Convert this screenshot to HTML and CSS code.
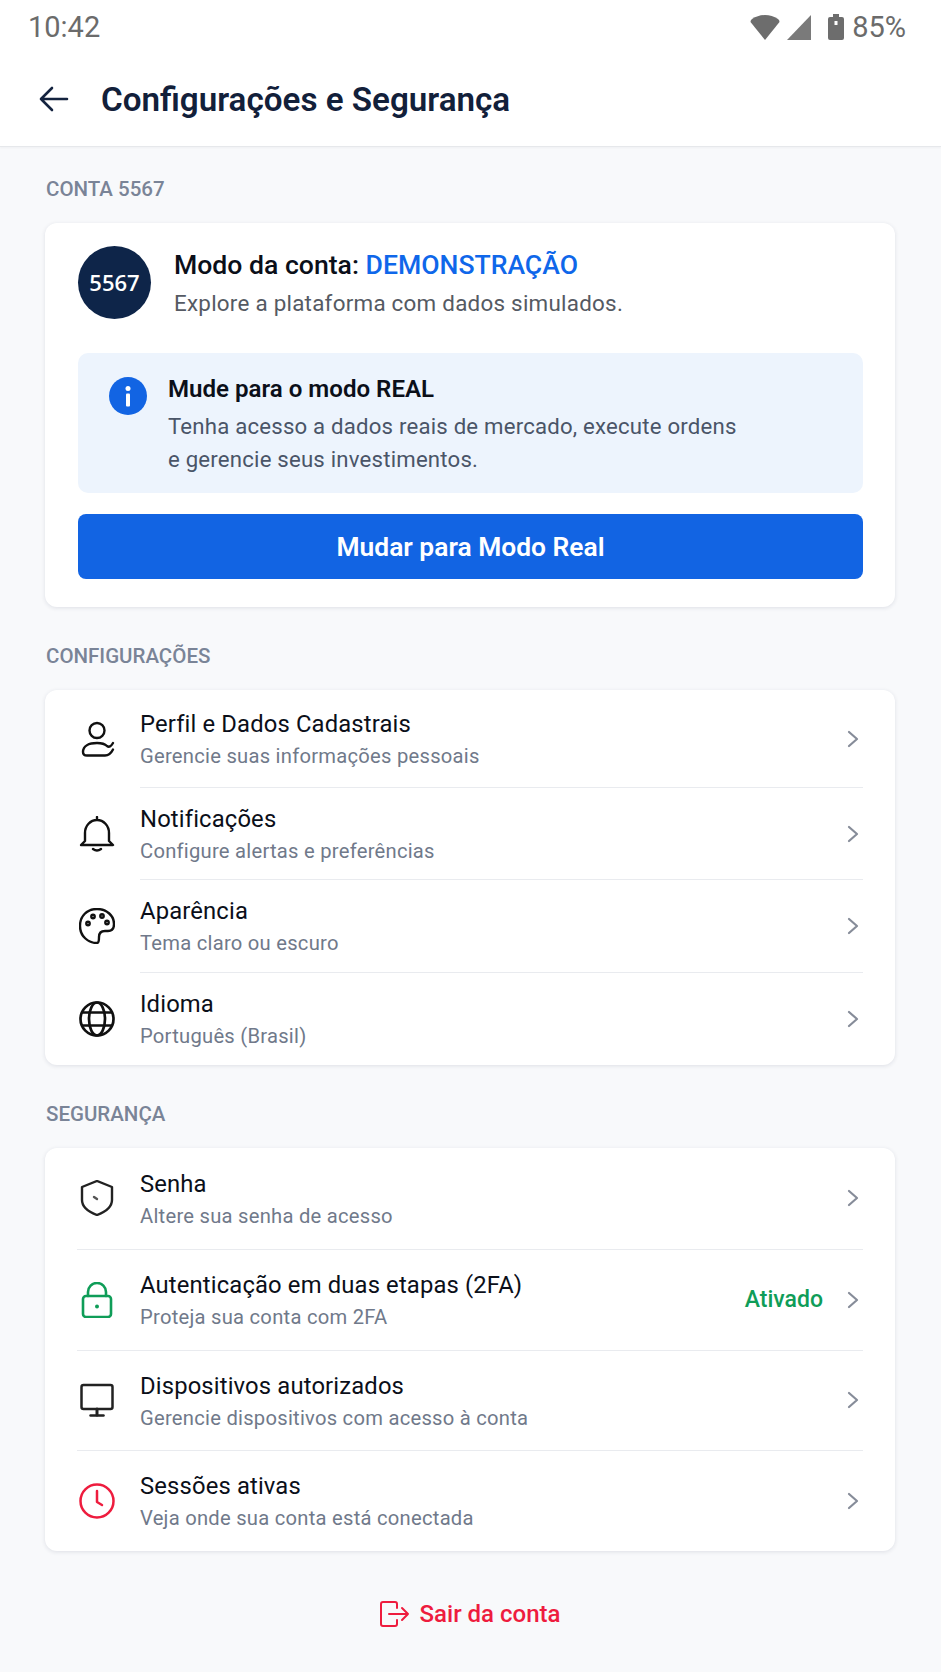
FILE: index.html
```html
<!DOCTYPE html>
<html lang="pt-BR">
<head>
<meta charset="utf-8">
<title>Configurações e Segurança</title>
<link rel="stylesheet" href="styles.css">
</head>
<body>
<div class="top">
  <div class="status">
    <span class="time">10:42</span>
    <div class="status-right">
      <svg class="st-wifi" viewBox="0 0 30 25"><path d="M15 25 .5 7Q.5 5 2 4 8 0 15 0t13 4q1.500 1 1.500 3Z" fill="#6d6d6d"/></svg>
      <svg class="st-signal" viewBox="0 0 24 25"><path d="M24 0v25H0Z" fill="#7a7a7a"/></svg>
      <svg class="st-batt" viewBox="0 0 16 26"><path d="M5 0h6v3h3q2 0 2 2v19q0 2-2 2H2q-2 0-2-2V5q0-2 2-2h3Z" fill="#6d6d6d"/><rect x="6.500" y="7" width="3" height="4" fill="#fff"/></svg>
      <span class="batt-text">85%</span>
    </div>
  </div>
  <header class="appbar">
    <svg class="back" viewBox="0 0 30 26" fill="none" stroke="#14233f" stroke-width="2.600" stroke-linecap="round" stroke-linejoin="round"><path d="M2 13h26M13 2 2 13l11 11"/></svg>
    <h1>Configurações e Segurança</h1>
  </header>
</div>

<main class="content">
  <h2 class="label label-first">CONTA 5567</h2>
  <section class="card account">
    <div class="acc-head">
      <div class="avatar">5567</div>
      <div class="acc-text">
        <p class="acc-title">Modo da conta: <span class="demo">DEMONSTRAÇÃO</span></p>
        <p class="acc-sub">Explore a plataforma com dados simulados.</p>
      </div>
    </div>
    <div class="notice">
      <svg class="info" viewBox="0 0 38 38"><circle cx="19" cy="19" r="19" fill="#1264e3"/><circle cx="19" cy="11.500" r="2.500" fill="#fff"/><rect x="17" y="16.500" width="4" height="13" rx="1" fill="#fff"/></svg>
      <div>
        <p class="notice-title">Mude para o modo REAL</p>
        <p class="notice-text">Tenha acesso a dados reais de mercado, execute ordens<br>e gerencie seus investimentos.</p>
      </div>
    </div>
    <button class="cta">Mudar para Modo Real</button>
  </section>

  <h2 class="label">CONFIGURAÇÕES</h2>
  <section class="card list list-settings">
    <div class="row">
      <svg class="ico" viewBox="0 0 36 36" fill="none" stroke="#111" stroke-width="2.400" stroke-linecap="round" stroke-linejoin="round"><circle cx="18" cy="9.500" r="7.500"/><path d="M4 31c0-6 6-9 14-9 5 0 8 1 10 3 2 1.500 4 .5 6-3M4 31c0 2 1.500 3.500 4 3.500h18c4 0 6-2 8-6"/></svg>
      <div class="row-main">
        <div class="rt"><div class="t">Perfil e Dados Cadastrais</div><div class="s">Gerencie suas informações pessoais</div></div>
        <svg class="chev" viewBox="0 0 12 18" fill="none" stroke="#868c99" stroke-width="2.200" stroke-linecap="round" stroke-linejoin="round"><path d="m2 2 8 7-8 7"/></svg>
      </div>
    </div>
    <div class="row">
      <svg class="ico" viewBox="0 0 36 36" fill="none" stroke="#111" stroke-width="2.400" stroke-linecap="round" stroke-linejoin="round"><path d="M18 1v3M6 17a12 13 0 0 1 24 0v8l4 4H2l4-4ZM14 33q4 3 8 0"/></svg>
      <div class="row-main">
        <div class="rt"><div class="t">Notificações</div><div class="s">Configure alertas e preferências</div></div>
        <svg class="chev" viewBox="0 0 12 18" fill="none" stroke="#868c99" stroke-width="2.200" stroke-linecap="round" stroke-linejoin="round"><path d="m2 2 8 7-8 7"/></svg>
      </div>
    </div>
    <div class="row">
      <svg class="ico" viewBox="0 0 36 36" fill="none" stroke="#111" stroke-width="2.400" stroke-linecap="round" stroke-linejoin="round"><path d="M18 1C8 1 1 8 1 18c0 10 8 17 17 17 2 0 2-3 2-6 0-4 2-6 6-6h3c4 0 6-3 6-7C35 8 28 1 18 1Z"/><circle cx="9" cy="15.500" r="1.700"/><circle cx="14" cy="8.500" r="1.700"/><circle cx="23" cy="8" r="1.700"/><circle cx="28" cy="14.500" r="1.700"/></svg>
      <div class="row-main">
        <div class="rt"><div class="t">Aparência</div><div class="s">Tema claro ou escuro</div></div>
        <svg class="chev" viewBox="0 0 12 18" fill="none" stroke="#868c99" stroke-width="2.200" stroke-linecap="round" stroke-linejoin="round"><path d="m2 2 8 7-8 7"/></svg>
      </div>
    </div>
    <div class="row">
      <svg class="ico" viewBox="0 0 36 36" fill="none" stroke="#111" stroke-width="2.700"><circle cx="18" cy="18" r="16.500"/><ellipse cx="18" cy="18" rx="8" ry="16.500"/><path d="M3 11.500h30M3 24.500h30"/></svg>
      <div class="row-main">
        <div class="rt"><div class="t">Idioma</div><div class="s">Português (Brasil)</div></div>
        <svg class="chev" viewBox="0 0 12 18" fill="none" stroke="#868c99" stroke-width="2.200" stroke-linecap="round" stroke-linejoin="round"><path d="m2 2 8 7-8 7"/></svg>
      </div>
    </div>
  </section>

  <h2 class="label">SEGURANÇA</h2>
  <section class="card list list-security">
    <div class="row">
      <svg class="ico" viewBox="0 0 36 36" fill="none" stroke="#222" stroke-width="2.400" stroke-linecap="round" stroke-linejoin="round"><path d="M18 1 33 7v13c0 8-7 12-15 15C10 32 3 28 3 20V7Z"/><path d="m15 17 3 2" stroke="#555"/></svg>
      <div class="row-main">
        <div class="rt"><div class="t">Senha</div><div class="s">Altere sua senha de acesso</div></div>
        <svg class="chev" viewBox="0 0 12 18" fill="none" stroke="#868c99" stroke-width="2.200" stroke-linecap="round" stroke-linejoin="round"><path d="m2 2 8 7-8 7"/></svg>
      </div>
    </div>
    <div class="row">
      <svg class="ico" viewBox="0 0 36 36" fill="none" stroke="#0f9d58" stroke-width="2.600" stroke-linecap="round" stroke-linejoin="round"><rect x="4" y="14" width="28" height="21" rx="3"/><path d="M9 14V10a9 9 0 0 1 18 0v4"/><circle cx="18" cy="24.500" r="2" fill="#0f9d58" stroke="none"/></svg>
      <div class="row-main">
        <div class="rt"><div class="t">Autenticação em duas etapas (2FA)</div><div class="s">Proteja sua conta com 2FA</div></div>
        <span class="on">Ativado</span>
        <svg class="chev" viewBox="0 0 12 18" fill="none" stroke="#868c99" stroke-width="2.200" stroke-linecap="round" stroke-linejoin="round"><path d="m2 2 8 7-8 7"/></svg>
      </div>
    </div>
    <div class="row">
      <svg class="ico" viewBox="0 0 36 36" fill="none" stroke="#222" stroke-width="2.500" stroke-linecap="round" stroke-linejoin="round"><rect x="2.500" y="3" width="31" height="24" rx="2"/><path d="M18 27v6" stroke-width="3"/><path d="M11.500 33.500h13" stroke-width="2.500"/></svg>
      <div class="row-main">
        <div class="rt"><div class="t">Dispositivos autorizados</div><div class="s">Gerencie dispositivos com acesso à conta</div></div>
        <svg class="chev" viewBox="0 0 12 18" fill="none" stroke="#868c99" stroke-width="2.200" stroke-linecap="round" stroke-linejoin="round"><path d="m2 2 8 7-8 7"/></svg>
      </div>
    </div>
    <div class="row">
      <svg class="ico" viewBox="0 0 36 36" fill="none" stroke="#ee1c3e" stroke-width="2.500" stroke-linecap="round" stroke-linejoin="round"><circle cx="18" cy="18" r="16.500"/><path d="M18 8v11l5 3"/></svg>
      <div class="row-main">
        <div class="rt"><div class="t">Sessões ativas</div><div class="s">Veja onde sua conta está conectada</div></div>
        <svg class="chev" viewBox="0 0 12 18" fill="none" stroke="#868c99" stroke-width="2.200" stroke-linecap="round" stroke-linejoin="round"><path d="m2 2 8 7-8 7"/></svg>
      </div>
    </div>
  </section>

  <button class="logout">
    <svg class="logout-ico" viewBox="0 0 30 26" fill="none" stroke="#ee1c3e" stroke-width="2" stroke-linecap="round" stroke-linejoin="round"><path d="M17 7V3q0-2-2-2H3Q1 1 1 3v20q0 2 2 2h12q2 0 2-2v-4M9 13h19M22 7l6 6-6 6"/></svg>
    Sair da conta
  </button>
</main>
</body>
</html>
```

FILE: styles.css
```css
* { box-sizing: border-box; }
html, body { margin: 0; padding: 0; }
body {
  width: 941px;
  min-height: 1672px;
  background: #f8f9fb;
  font-family: Roboto, "Liberation Sans", sans-serif;
  color: #0b0f19;
}
p, h1, h2 { margin: 0; font-weight: normal; }

.top {
  background: #fff;
  height: 147px;
  border-bottom: 1px solid #e6e8eb;
  box-shadow: 0 1px 2px rgba(20, 30, 50, .04);
}
.status {
  height: 54px;
  display: flex;
  justify-content: space-between;
  align-items: center;
  padding: 0 35px 0 28px;
  color: #6b6b6b;
  font-size: 29px;
}
.status-right { display: flex; align-items: center; }
.st-wifi { width: 30px; height: 25px; }
.st-signal { width: 24px; height: 25px; margin-left: 7px; }
.st-batt { width: 16px; height: 26px; margin-left: 17px; }
.batt-text { margin-left: 8px; }

.appbar {
  height: 92px;
  display: flex;
  align-items: center;
  padding: 0 0 2px 39px;
}
.back { width: 30px; height: 26px; }
h1 {
  margin-left: 32px;
  font-size: 33.200px;
  font-weight: 600;
  color: #12203a;
}

.content { padding: 0 46px 0 45px; }
.label {
  font-size: 20.500px;
  font-weight: 500;
  color: #7a8497;
  line-height: 24px;
  margin: 37px 1px 22px;
}
.label-first { margin-top: 30px; margin-bottom: 22px; }
.card {
  background: #fff;
  border-radius: 12px;
  box-shadow: 0 1px 4px rgba(30, 40, 70, .12);
}

.account { height: 384px; padding: 23px 32px 0 33px; }
.acc-head { display: flex; align-items: center; height: 72px; }
.avatar {
  width: 73px;
  height: 73px;
  border-radius: 50%;
  background: #0e2549;
  color: #fff;
  display: flex;
  align-items: center;
  justify-content: center;
  font-family: "Open Sans", sans-serif;
  font-size: 22px;
  font-weight: 600;
  flex: none;
}
.acc-text { margin-left: 23px; padding-top: 3px; }
.acc-title { font-size: 26.600px; font-weight: 500; line-height: 36px; color: #0b0f19; }
.demo { color: #0f67ea; }
.acc-sub { font-size: 22.400px; color: #555a63; line-height: 34px; margin-top: 3px; letter-spacing: .25px; }

.notice {
  height: 140px;
  margin-top: 35px;
  background: #edf4fd;
  border-radius: 10px;
  display: flex;
  padding: 21px 31px;
}
.info { width: 38px; height: 38px; flex: none; margin-top: 3px; }
.notice > div { margin-left: 21px; }
.notice-title { font-size: 24.100px; font-weight: 600; line-height: 30px; color: #0b0f19; }
.notice-text { font-size: 22.200px; line-height: 33px; color: #4a5568; margin-top: 6px; letter-spacing: .2px; }

.cta {
  display: block;
  width: 100%;
  height: 65px;
  margin-top: 21px;
  border: 0;
  border-radius: 8px;
  background: #1264e3;
  color: #fff;
  font: 600 26.400px Roboto, "Liberation Sans", sans-serif;
}

.list { padding: 0 32px; }
.row { display: flex; align-items: center; }
.row-main {
  flex: 1;
  align-self: stretch;
  display: flex;
  align-items: center;
  margin-left: 25px;
}
.list-settings .row { height: 92.330px; }
.list-settings .row:first-child { height: 98px; }
.list-security .row { height: 100px; }
.list-security .row:nth-child(1) { height: 102px; }
.list-security .row:nth-child(2) { height: 101px; }
.list-settings .row:not(:last-child) .row-main { border-bottom: 1px solid #e9ebef; }
.list-security .row:not(:last-child) { border-bottom: 1px solid #e9ebef; }
.ico { width: 36px; height: 36px; flex: none; margin-left: 2px; }
.rt { flex: 1; padding-top: 1px; }
.t { font-size: 23.800px; line-height: 32px; color: #0b0f19; letter-spacing: .15px; }
.s { font-size: 20.200px; line-height: 28px; color: #70798a; letter-spacing: .25px; margin-top: 2px; }
.chev { width: 12px; height: 18px; flex: none; margin-right: 4px; }
.on { font-size: 23px; font-weight: 500; color: #0f9d58; margin-right: 24px; }

.logout {
  display: flex;
  align-items: center;
  justify-content: center;
  width: 100%;
  height: 60px;
  margin-top: 33px;
  background: none;
  border: 0;
  color: #ee1c3e;
  font: 500 24px Roboto, "Liberation Sans", sans-serif;
}
.logout-ico { width: 30px; height: 26px; margin-right: 10px; }
```
